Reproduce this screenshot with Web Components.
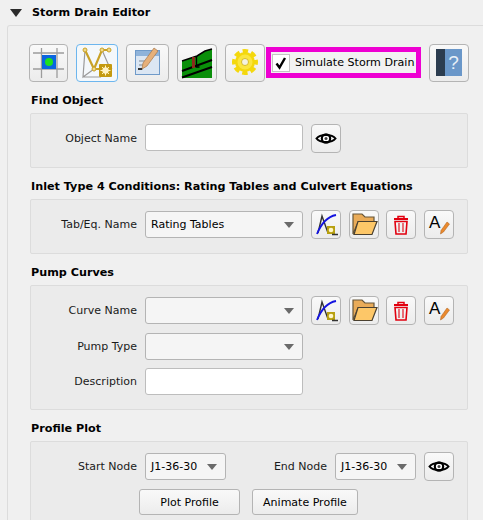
<!DOCTYPE html>
<html>
<head>
<meta charset="utf-8">
<title>Storm Drain Editor</title>
<style>
  html, body { margin: 0; height: 520px; overflow: hidden; background: #f0f0f0; }
  body { font: 11px "DejaVu Sans", sans-serif; color: #000; }
</style>
</head>
<body>
<sd-editor heading="Storm Drain Editor">
  <sd-toolbar>
    <sd-tool w="39">
      <svg viewBox="1 1 37 36"><g stroke="#9c9c9c" stroke-width="1.300"><path d="M12.500 4v30M28 4v30M4 9h31M4 25h31"/></g><rect x="13" y="11" width="14" height="14" fill="#0a66e0"/><circle cx="20" cy="18" r="4" fill="#1ee01e"/></svg>
    </sd-tool>
    <sd-tool w="42" active>
      <svg viewBox="1 1 40 36"><g fill="none" stroke="#9a9a9a" stroke-width="1.200"><path d="M9 6 7 33l11-8M26 6l7 16 3 3M7 33h18"/></g><g fill="none" stroke="#c9a227" stroke-width="2.200"><path d="M9 6 18 25 26 6h7M18 25h7"/></g><g fill="#f1d98a" stroke="#c9a227"><circle cx="9" cy="6" r="2"/><circle cx="26" cy="6" r="2"/><circle cx="33" cy="6" r="2"/><circle cx="18" cy="25" r="2"/></g><rect x="23" y="20" width="13" height="13" rx="1" fill="#c49a10"/><circle cx="29.500" cy="26.500" r="3.200" fill="#fff3c4"/><path d="M29.500 21.500v10M24.500 26.500h10M26 23l7 7M33 23l-7 7" stroke="#fff3c4"/></svg>
    </sd-tool>
    <sd-tool w="43">
      <svg viewBox="1 1 41 36"><rect x="9.500" y="6.500" width="24" height="24" fill="#dbe6f3" stroke="#6f9ac9"/><rect x="10" y="7" width="23" height="5" fill="#8fb3da"/><path d="M13 17h8M13 21h6M13 25h4" stroke="#7d8894"/><path d="M28 4l4 3-11 15-5 3 1-6z" fill="#e6b07a" stroke="#a8794a" stroke-width=".7"/><path d="M16 24h-4v2h4z" fill="#333"/></svg>
    </sd-tool>
    <sd-tool w="40">
      <svg viewBox="1 1 38 36"><path d="M5 17 20 12 28 7 35 5V34H5z" fill="#0a8f0a"/><path d="M5 17 20 12 28 7 35 5" fill="none" stroke="#000" stroke-width="1.500"/><path d="M5 27l30-11M5 33.500 35 23" stroke="#000" stroke-width="2"/><path d="M15 13h3v11h-3z" fill="#8a2a1c"/><path d="M19.500 12v11h3" fill="none" stroke="#000" stroke-width="1.300"/></svg>
    </sd-tool>
    <sd-tool w="40">
      <svg viewBox="1 1 38 36"><circle cx="20" cy="18" r="10.800" fill="none" stroke="#f4d80e" stroke-width="4.400" stroke-dasharray="5.300 3.180" stroke-dashoffset="2.650"/><circle cx="20" cy="18" r="10" fill="#f4d80e"/><circle cx="20" cy="18" r="7.500" fill="#fbe640"/><circle cx="20" cy="18" r="3.500" fill="#f4f2e2" stroke="#c9a800" stroke-width=".7"/></svg>
    </sd-tool>
    <sd-check>Simulate Storm Drain</sd-check>
    <sd-tool w="40">
      <svg viewBox="1 1 38 36"><rect x="7" y="5" width="10" height="27" fill="#2c3d50"/><rect x="16" y="5" width="17" height="27" fill="#6a97c9"/><text x="24.500" y="25" text-anchor="middle" font-family="Liberation Sans" font-size="19" fill="#e8f0f8">?</text></svg>
    </sd-tool>
  </sd-toolbar>

  <sd-group heading="Find Object">
    <sd-row label="Object Name">
      <sd-input top></sd-input>
      <sd-tool w="30" h="29"><sd-eye></sd-eye></sd-tool>
    </sd-row>
  </sd-group>

  <sd-group heading="Inlet Type 4 Conditions: Rating Tables and Culvert Equations">
    <sd-row label="Tab/Eq. Name">
      <sd-combo value="Rating Tables"></sd-combo>
      <sd-curve-tools></sd-curve-tools>
    </sd-row>
  </sd-group>

  <sd-group heading="Pump Curves">
    <sd-row label="Curve Name">
      <sd-combo></sd-combo>
      <sd-curve-tools></sd-curve-tools>
    </sd-row>
    <sd-row label="Pump Type"><sd-combo></sd-combo></sd-row>
    <sd-row label="Description"><sd-input></sd-input></sd-row>
  </sd-group>

  <sd-group heading="Profile Plot">
    <sd-row label="Start Node">
      <sd-combo value="J1-36-30" w="81"></sd-combo>
      <sd-label w="93">End Node</sd-label>
      <sd-combo value="J1-36-30" w="81"></sd-combo>
      <sd-tool w="30" h="29"><sd-eye></sd-eye></sd-tool>
    </sd-row>
    <sd-actions>
      <sd-button w="101">Plot Profile</sd-button>
      <sd-button w="106">Animate Profile</sd-button>
    </sd-actions>
  </sd-group>
</sd-editor>

<script>
function shadow(el, html) {
  el.attachShadow({ mode: 'open' }).innerHTML = html;
}

class SdEditor extends HTMLElement {
  connectedCallback() {
    shadow(this, `
      <style>
        :host { display: block; }
        .head { display: flex; align-items: center; height: 25px; padding-left: 10px; gap: 10px; font-weight: bold; font-size: 11.2px; }
        .tri { width: 0; height: 0; border: 6.5px solid transparent; border-top: 8px solid #2b2b2b; border-bottom: 0; }
        .box { margin-left: 7px; margin-right: -20px; border: 1px solid #dcdcdc; border-bottom: 0; border-radius: 3px 0 0 0; padding: 18px 0 0 22px; background: #f0f0f0; }
        .inner { width: 438px; }
      </style>
      <div class="head"><span class="tri"></span><span>${this.getAttribute('heading')}</span></div>
      <div class="box"><div class="inner"><slot></slot></div></div>
    `);
  }
}

class SdToolbar extends HTMLElement {
  connectedCallback() {
    shadow(this, `
      <style>:host { display: flex; align-items: flex-start; height: 38px; margin-left: -1px; gap: 8px; }</style>
      <slot></slot>
    `);
  }
}

class SdTool extends HTMLElement {
  connectedCallback() {
    const w = this.getAttribute('w') || 40;
    const h = this.getAttribute('h') || 38;
    shadow(this, `
      <style>
        :host { display: block; flex: none; box-sizing: border-box; width: ${w}px; height: ${h}px; border: 1px solid #b4b4b4; border-radius: 4px; background: linear-gradient(#f9f9f9, #ececec); overflow: hidden; }
        :host([active]) { border-color: #6db6ee; background: #f4f8fb; }
        ::slotted(svg) { display: block; width: 100%; height: 100%; }
      </style>
      <slot></slot>
    `);
  }
}

class SdCheck extends HTMLElement {
  connectedCallback() {
    shadow(this, `
      <style>
        :host { display: flex; align-items: center; flex: none; box-sizing: border-box; width: 155px; height: 31px; margin: 3px 0 0 -7px; border: 5px solid #ee00d2; padding-left: 1px; gap: 5px; background: #f2f2f2; }
        .box { box-sizing: border-box; width: 18px; height: 18px; border: 1px solid #c4c4c4; background: #fff; }
        svg { display: block; width: 16px; height: 16px; }
        .text { font-size: 11.1px; white-space: nowrap; }
      </style>
      <span class="box"><svg viewBox="0 0 16 16"><path d="M3.500 8.500 6.500 12.500 12 3" fill="none" stroke="#000" stroke-width="2.400"/></svg></span>
      <span class="text"><slot></slot></span>
    `);
  }
}

class SdGroup extends HTMLElement {
  connectedCallback() {
    shadow(this, `
      <style>
        :host { display: block; }
        .title { height: 14px; line-height: 14px; padding: 12px 0 5px 1px; font-weight: bold; font-size: 11.2px; white-space: nowrap; }
        .frame { box-sizing: border-box; border: 1px solid #dcdcdc; border-radius: 2px; background: #ebebeb; padding: 10px 0 14px 0; display: flex; flex-direction: column; gap: 8px; }
      </style>
      <div class="title">${this.getAttribute('heading')}</div>
      <div class="frame"><slot></slot></div>
    `);
  }
}

class SdRow extends HTMLElement {
  connectedCallback() {
    shadow(this, `
      <style>
        :host { display: flex; align-items: center; min-height: 27px; gap: 8px; }
        .label { box-sizing: border-box; width: 106px; text-align: right; color: #1a1a1a; white-space: nowrap; }
      </style>
      <span class="label">${this.getAttribute('label')}</span>
      <slot></slot>
    `);
  }
}

class SdLabel extends HTMLElement {
  connectedCallback() {
    shadow(this, `
      <style>:host { display: block; width: ${this.getAttribute('w')}px; text-align: right; color: #1a1a1a; white-space: nowrap; }</style>
      <slot></slot>
    `);
  }
}

class SdInput extends HTMLElement {
  connectedCallback() {
    shadow(this, `
      <style>
        :host { display: block; box-sizing: border-box; width: 158px; height: 27px; border: 1px solid #bdbdbd; border-radius: 3px; background: #fff; }
        :host([top]) { align-self: flex-start; }
      </style>
    `);
  }
}

class SdCombo extends HTMLElement {
  connectedCallback() {
    const w = this.getAttribute('w') || 158;
    shadow(this, `
      <style>
        :host { display: flex; align-items: center; justify-content: space-between; box-sizing: border-box; width: ${w}px; height: 27px; border: 1px solid #b4b4b4; border-radius: 3px; background: #f5f5f5; padding: 0 8px 0 5px; white-space: nowrap; }
        .arrow { width: 0; height: 0; border: 5.5px solid transparent; border-top: 6px solid #6a6a6a; border-bottom: 0; }
      </style>
      <span>${this.getAttribute('value') || ''}</span><span class="arrow"></span>
    `);
  }
}

class SdEye extends HTMLElement {
  connectedCallback() {
    shadow(this, `
      <style>:host { display: block; width: 100%; height: 100%; } svg { display: block; width: 100%; height: 100%; }</style>
      <svg viewBox="1 1 28 27"><path d="M5.500 14.500C9 9.800 21 9.800 24.500 14.500 21 19.200 9 19.200 5.500 14.500z" fill="#fff" stroke="#000" stroke-width="2"/><circle cx="15" cy="14.500" r="4.200" fill="none" stroke="#000" stroke-width="2.200"/><circle cx="15" cy="14.500" r="1.500" fill="#444"/></svg>
    `);
  }
}

class SdCurveTools extends HTMLElement {
  connectedCallback() {
    shadow(this, `
      <style>
        :host { display: flex; gap: 7.5px; }
        svg { display: block; width: 100%; height: 100%; }
      </style>
      <sd-tool w="30" h="29"><svg viewBox="1 1 28 27"><path d="M7 23 11 6l6 17" fill="none" stroke="#333" stroke-width="1.400"/><path d="M6 24C10 14 15 7 25 5" fill="none" stroke="#1414e0" stroke-width="1.800"/><rect x="16" y="16" width="8" height="8" fill="#b8a010"/><circle cx="20" cy="20" r="2.300" fill="#fff6c8"/><path d="M21 24.500h6" stroke="#333" stroke-width="1.300"/></svg></sd-tool>
      <sd-tool w="30" h="29"><svg viewBox="1 1 28 27"><path d="M4 24V4h9l3 3h9v5H9z" fill="#e9ab58" stroke="#66563a" stroke-width="1.200"/><path d="M5 24.500 9 11.500h19l-5 13z" fill="#fdc768" stroke="#4a4030" stroke-width="1.200"/></svg></sd-tool>
      <sd-tool w="30" h="29"><svg viewBox="1 1 28 27" fill="none" stroke="#e1000f"><path d="M8 9h14" stroke-width="2"/><path d="M12 8V6.500h6V8" stroke-width="1.500"/><path d="M9 11.500h12l-1 12.500h-10z" stroke-width="1.600"/><path d="M13 13v9M17 13v9" stroke-width="1.100"/></svg></sd-tool>
      <sd-tool w="30" h="29"><svg viewBox="1 1 28 27"><text x="5" y="18" font-family="Liberation Sans" font-size="17" fill="#000">A</text><path d="M23 12l2.500 2-6 8-3 2 .5-3.500z" fill="#ea8a2e" stroke="#a85c18" stroke-width=".5"/></svg></sd-tool>
    `);
  }
}

class SdActions extends HTMLElement {
  connectedCallback() {
    shadow(this, `
      <style>:host { display: flex; padding-left: 108px; gap: 12px; }</style>
      <slot></slot>
    `);
  }
}

class SdButton extends HTMLElement {
  connectedCallback() {
    shadow(this, `
      <style>
        :host { display: flex; align-items: center; justify-content: center; box-sizing: border-box; width: ${this.getAttribute('w')}px; height: 26px; border: 1px solid #b4b4b4; border-radius: 3px; background: linear-gradient(#f9f9f9, #ececec); white-space: nowrap; }
      </style>
      <slot></slot>
    `);
  }
}

customElements.define('sd-editor', SdEditor);
customElements.define('sd-toolbar', SdToolbar);
customElements.define('sd-tool', SdTool);
customElements.define('sd-check', SdCheck);
customElements.define('sd-group', SdGroup);
customElements.define('sd-row', SdRow);
customElements.define('sd-label', SdLabel);
customElements.define('sd-input', SdInput);
customElements.define('sd-combo', SdCombo);
customElements.define('sd-eye', SdEye);
customElements.define('sd-curve-tools', SdCurveTools);
customElements.define('sd-actions', SdActions);
customElements.define('sd-button', SdButton);
</script>
</body>
</html>
